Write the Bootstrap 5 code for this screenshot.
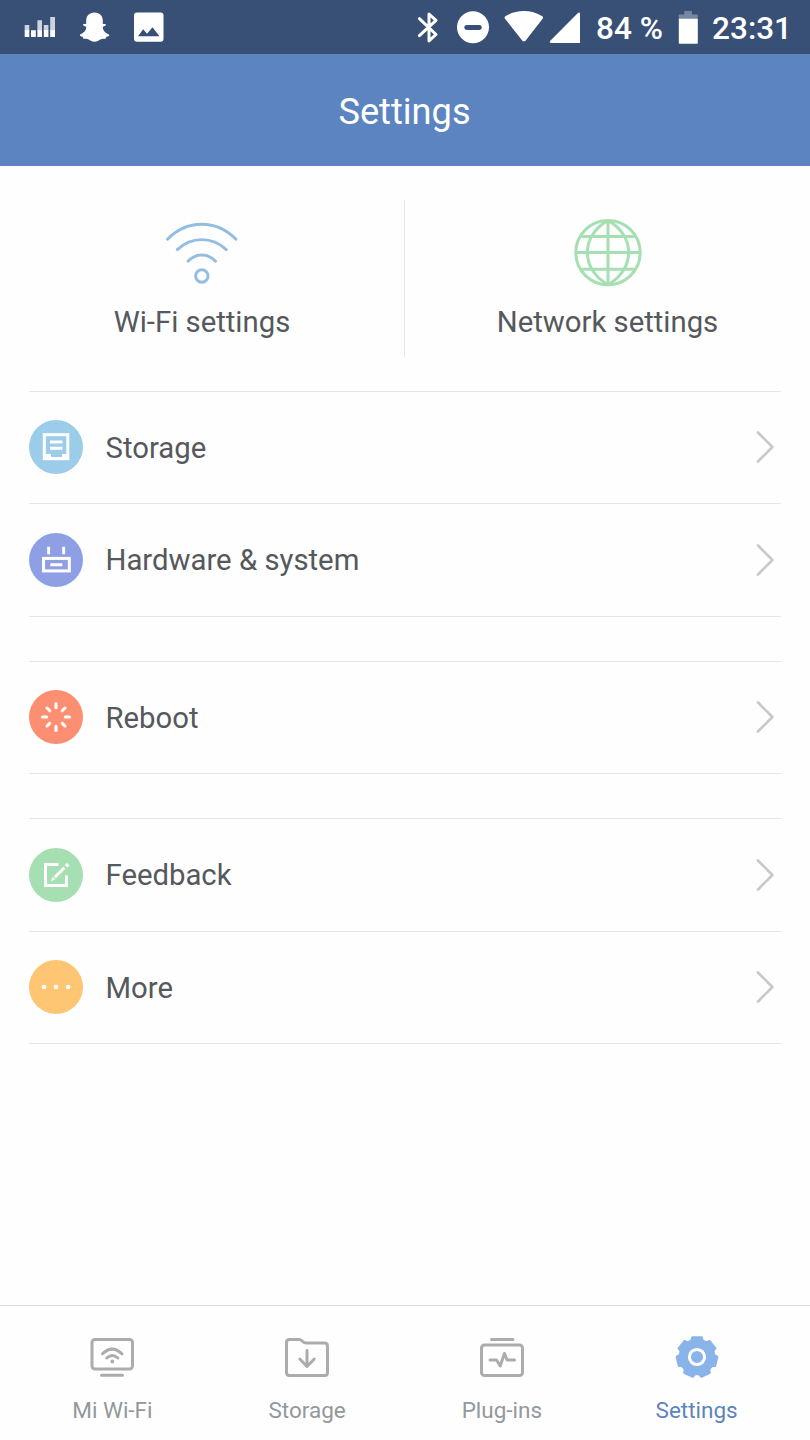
<!DOCTYPE html>
<html lang="en">
<head>
<meta charset="utf-8">
<meta name="viewport" content="width=device-width, initial-scale=1">
<title>Settings</title>
<link href="https://cdn.jsdelivr.net/npm/bootstrap@5.3.0/dist/css/bootstrap.min.css" rel="stylesheet">
<style>
  body { font-family: Roboto, "Liberation Sans", sans-serif; color: #55585c; background: #fefefe; font-size: 29.3px; line-height: 1.2; }
  svg { display: block; flex: none; }
  .screen { height: 1440px; overflow: hidden; }
  .statusbar { height: 54px; background: #385075; padding: 0 18px 0 24px; }
  .status-text { font-size: 31.5px; font-weight: 500; line-height: 54px; padding-top: 2px; white-space: nowrap; }
  .titlebar { height: 112.4px; background: #5b84c0; font-size: 36.2px; padding-top: 3px; padding-right: 1px; }
  .panel { height: 224.5px; padding: 34px 0 33.5px 0; }
  .panel-half { padding-top: 16px; }
  .panel-half:first-child { width: 404px; }
  .panel-half + .panel-half { border-left: 1px solid #e6e6e6; }
  .panel-half span { margin-top: 15px; }
  .rows { margin: 0 29px; border-bottom: 1px solid #e6e6e6; }
  .rows + .rows { margin-top: 44px; }
  .setting { height: 112.5px; border-top: 1px solid #e6e6e6; padding-right: 6px; padding-bottom: 1px; }
  .setting span { margin-left: 22.5px; padding-top: 2.6px; }
  .tabs { height: 135px; border-top: 1px solid #dcdcdc; padding: 30px 16px 0 15px; font-size: 22.5px; color: #93989c; }
  .tabs span { margin-top: 17px; }
  .tab-on { color: #5b84c0; }
  .thin { fill: none; stroke: #acacac; stroke-width: 3; stroke-linecap: round; stroke-linejoin: round; }
</style>
</head>
<body>
<div class="screen d-flex flex-column">
  <div class="statusbar d-flex justify-content-between align-items-start text-white">
    <div class="d-flex">
      <svg width="32" height="54" viewBox="24 0 32 54"><g fill="#cdd4de"><path d="M24.7 25h4.6v6h-4.6zM37.4 20.3H42V31h-4.600zM43.800 25h4.600v6h-4.600zM50.200 17H55v14h-4.800z"/></g><path fill="#fff" d="M24.700 30.300h4.600V37h-4.600zM31 30.300h4.800V37H31zM37.400 30.300H42V37h-4.600zM43.800 30.300h4.600V37h-4.600zM50.200 30.300H55V37h-4.800z"/></svg>
      <svg class="ms-4" width="30" height="54" viewBox="80 0 30 54"><path fill="#fff" d="M94.500 12.600c-5.500 0-8.300 3.800-8.300 8v3.200c-1.200.5-2.800-.2-3.100.9-.2 1 1.700 1.600 3 2.200.5 3.300-2.600 6.500-6 7.700-.9.500-.2 1.700 2.400 2.100.6.300.3 1.900 1.200 2 1.500.1 3.200-.4 5 .7 1.700 1 3.200 2.300 5.800 2.300s4.100-1.300 5.800-2.300c1.800-1.100 3.500-.6 5-.7.900-.1.600-1.700 1.200-2 2.600-.4 3.300-1.600 2.400-2.100-3.400-1.200-6.500-4.400-6-7.700 1.300-.6 3.200-1.200 3-2.200-.3-1.100-1.900-.4-3.100-.9v-3.200c0-4.200-2.800-8-8.300-8z"/></svg>
      <svg class="ms-4" width="30" height="54" viewBox="134 0 30 54"><rect x="134" y="12.500" width="29.500" height="29.300" rx="3" fill="#fff"/><path fill="#385075" d="M138 36.300l5.200-7 3.800 4.400 5.500-6.500 7 9.100z"/></svg>
    </div>
    <div class="d-flex">
      <svg width="172" height="54" viewBox="414 0 172 54">
        <path d="M419.400 18.700L436 34.500 429 40.800V14l7 6.300-16.600 15.400" fill="none" stroke="#fff" stroke-width="3" stroke-linejoin="round" stroke-linecap="round"/>
        <circle cx="473" cy="27.200" r="16" fill="#fff"/><rect x="464.300" y="25" width="17.500" height="5" rx="2.400" fill="#385075"/>
        <path fill="#fff" d="M505.300 16.300c11-7 26-7 37 0 .8.600.9 1.700.3 2.500L525.700 40.400c-.9 1.200-2.600 1.200-3.500 0L505 18.800c-.6-.8-.5-1.900.3-2.500z"/>
        <path fill="#fff" d="M580 14.200V43h-28.600c-1.700 0-2.200-1.200-1.100-2.300L577.700 13.200c1.200-1.100 2.300-.6 2.300 1z"/>
      </svg>
      <div class="status-text" style="width:92px;padding-left:10px">84 %</div>
      <svg width="34" height="54" viewBox="678 0 34 54"><path fill="#7587a3" d="M684.300 11h7.600v3.600h5.800V19h-19v-4.400h5.600z"/><path fill="#fff" d="M678.800 18.700h19V43q0 .8-.8.800h-17.400q-.8 0-.8-.8z"/></svg>
      <div class="status-text">23:31</div>
    </div>
  </div>

  <header class="titlebar d-flex align-items-center justify-content-center text-white">Settings</header>

  <section class="panel d-flex">
    <div class="panel-half d-flex flex-column align-items-center">
      <svg width="74" height="74" viewBox="165 216 74 74" fill="none" stroke="#94bde2" stroke-width="2.900" stroke-linecap="round"><path d="M167.500 239.300q14.500-15 34.200-15t34.200 15M177.300 249.600q10.500-10 24.500-10t24.500 10M188 261.300q6-6.300 13.800-6.300t13.800 6.300"/><circle cx="201.800" cy="276" r="6.200"/></svg>
      <span>Wi-Fi settings</span>
    </div>
    <div class="panel-half flex-grow-1 d-flex flex-column align-items-center">
      <svg width="74" height="74" viewBox="570.500 216 74 74" fill="none" stroke="#a6dfb1" stroke-width="3"><circle cx="607.500" cy="252.600" r="32.200"/><path d="M607.500 220.400v64.400M575.300 252.600h64.400M581 236.400h53M581 269.300h53M607.500 220.400C580 236 580 269 607.500 284.800M607.500 220.400C635 236 635 269 607.500 284.800"/></svg>
      <span>Network settings</span>
    </div>
  </section>

  <div class="rows">
    <div class="setting d-flex align-items-center">
      <svg width="54" height="54"><circle cx="27" cy="27" r="27" fill="#9bcce9"/><rect x="15.300" y="14.700" width="23.500" height="24" fill="none" stroke="#fff" stroke-width="3"/><path d="M15 34h7v3h11v-3h6v6H15zM21 20.500h12.500v3H21zM21 26.800h12.500v3H21z" fill="#fff"/></svg>
      <span class="flex-grow-1">Storage</span>
      <svg width="20" height="34" fill="none" stroke="#c8c8c8" stroke-width="2.600" stroke-linecap="round" stroke-linejoin="round"><path d="M3 2.500L17.400 17 3 31.500"/></svg>
    </div>
    <div class="setting d-flex align-items-center">
      <svg width="54" height="54"><circle cx="27" cy="27" r="27" fill="#8f9fe4"/><rect x="14.500" y="25.400" width="25.800" height="12.500" fill="none" stroke="#fff" stroke-width="3"/><path d="M18.200 13.700h2.900v7.600h-2.900zM33.200 13.700h2.900v7.600h-2.900zM21.300 30.200h12v3h-12z" fill="#fff"/></svg>
      <span class="flex-grow-1">Hardware &amp; system</span>
      <svg width="20" height="34" fill="none" stroke="#c8c8c8" stroke-width="2.600" stroke-linecap="round" stroke-linejoin="round"><path d="M3 2.500L17.400 17 3 31.500"/></svg>
    </div>
  </div>
  <div class="rows">
    <div class="setting d-flex align-items-center">
      <svg width="54" height="54"><circle cx="27" cy="27" r="27" fill="#fc8e72"/><path d="M27 13.500v4.200M27 36.300v4.200M13.500 27h4.200M36.300 27h4.200M18 18l2.800 2.800M33.200 33.200L36 36M36 18l-2.800 2.800M20.800 33.200L18 36" stroke="#fff" stroke-width="3" stroke-linecap="round"/></svg>
      <span class="flex-grow-1">Reboot</span>
      <svg width="20" height="34" fill="none" stroke="#c8c8c8" stroke-width="2.600" stroke-linecap="round" stroke-linejoin="round"><path d="M3 2.500L17.400 17 3 31.500"/></svg>
    </div>
  </div>
  <div class="rows">
    <div class="setting d-flex align-items-center">
      <svg width="54" height="54"><circle cx="27" cy="27" r="27" fill="#a6dfb1"/><path d="M29.500 16.600H16.500V37.600H37.500V27.500" fill="none" stroke="#fff" stroke-width="3"/><path d="M25.800 29.200L35.300 19.700" stroke="#fff" stroke-width="3"/><path d="M36.200 17.200l1.800-1.900 2 2-1.900 1.900zM22.500 32.600l1.500-3 1.700 1.700z" fill="#fff" stroke="#fff" stroke-width=".8"/></svg>
      <span class="flex-grow-1">Feedback</span>
      <svg width="20" height="34" fill="none" stroke="#c8c8c8" stroke-width="2.600" stroke-linecap="round" stroke-linejoin="round"><path d="M3 2.500L17.400 17 3 31.500"/></svg>
    </div>
    <div class="setting d-flex align-items-center">
      <svg width="54" height="54"><circle cx="27" cy="27" r="27" fill="#fec672"/><g fill="#fff"><circle cx="15" cy="27" r="2.300"/><circle cx="27" cy="27" r="2.300"/><circle cx="39.200" cy="27" r="2.300"/></g></svg>
      <span class="flex-grow-1">More</span>
      <svg width="20" height="34" fill="none" stroke="#c8c8c8" stroke-width="2.600" stroke-linecap="round" stroke-linejoin="round"><path d="M3 2.500L17.400 17 3 31.500"/></svg>
    </div>
  </div>

  <nav class="tabs d-flex mt-auto">
    <div class="col d-flex flex-column align-items-center">
      <svg width="46" height="44" viewBox="-.5 .5 46 44" class="thin"><rect x="2.500" y="4" width="40.500" height="29.500" rx="3"/><path d="M12 39.800h21M13 18.300q9.500-9.500 19.500 0M17.300 22.500q5.500-5 11 0"/><circle cx="22.800" cy="26" r="1.900" fill="#acacac" stroke="none"/></svg>
      <span>Mi Wi-Fi</span>
    </div>
    <div class="col d-flex flex-column align-items-center">
      <svg width="46" height="44" viewBox="0 .5 46 44" class="thin"><path d="M5.500 4H15q1.500 0 2.800 1.200Q20 7.500 22.500 7.500H40.500Q43.500 7.500 43.500 10.500V37Q43.500 40 40.500 40H5.500Q2.500 40 2.500 37V7Q2.500 4 5.500 4zM23 15v15.500M15.800 23.500L23 31l7.200-7.500"/></svg>
      <span>Storage</span>
    </div>
    <div class="col d-flex flex-column align-items-center">
      <svg width="46" height="44" viewBox="0 .5 46 44" class="thin"><rect x="2.500" y="9.500" width="41" height="30.500" rx="3"/><path d="M12.500 4H34M11 24.500h6.500l3.700 6 4.200-12.500 2.800 6.500H35.500"/></svg>
      <span>Plug-ins</span>
    </div>
    <div class="col d-flex flex-column align-items-center tab-on">
      <svg width="46" height="44" viewBox="-23 -21 46 44"><defs><path id="tooth" d="M-4.800-19.800L4.800-19.800 5.400-17 7.800-15 0 0-7.800-15-5.400-17z"/></defs><g fill="#89b4ea" stroke="#89b4ea" stroke-width="2" stroke-linejoin="round"><circle r="15.500"/><use href="#tooth"/><use href="#tooth" transform="rotate(51.430)"/><use href="#tooth" transform="rotate(102.860)"/><use href="#tooth" transform="rotate(154.290)"/><use href="#tooth" transform="rotate(205.710)"/><use href="#tooth" transform="rotate(257.140)"/><use href="#tooth" transform="rotate(308.570)"/></g><circle r="7.600" fill="none" stroke="#fff" stroke-width="3"/></svg>
      <span>Settings</span>
    </div>
  </nav>
</div>
<script src="https://cdn.jsdelivr.net/npm/bootstrap@5.3.0/dist/js/bootstrap.bundle.min.js"></script>
</body>
</html>
